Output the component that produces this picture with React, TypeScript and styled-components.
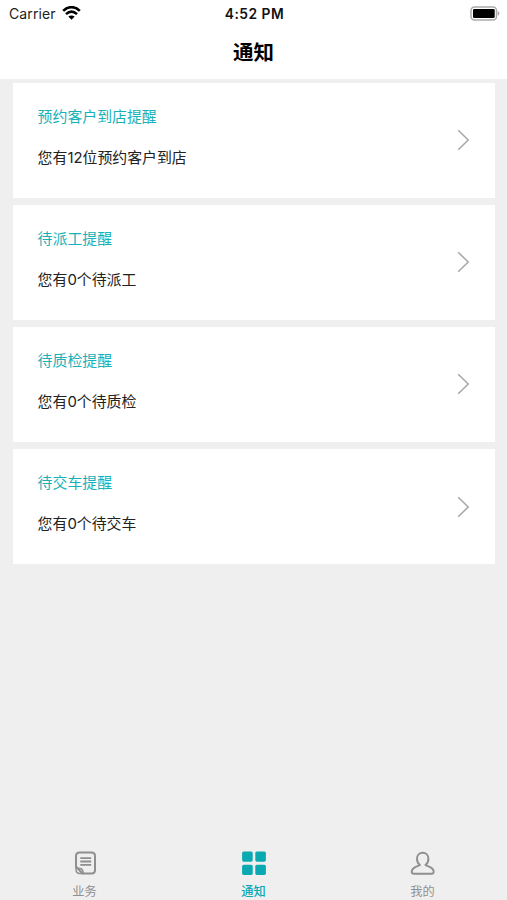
import React from 'react';
import styled, { createGlobalStyle } from 'styled-components';

const GlobalStyle = createGlobalStyle`
  * { box-sizing: border-box; }
  body {
    margin: 0;
    background: #efefef;
    font-family: Inter, "Noto Sans CJK SC", sans-serif;
  }
`;

const Screen = styled.div`
  display: flex;
  flex-direction: column;
  width: 100%;
  height: 900px;
  overflow: hidden;
  background: #efefef;
`;

const Header = styled.header`
  flex: none;
  height: 79px;
  background: #fff;
`;

const StatusBar = styled.div`
  display: grid;
  grid-template-columns: 1fr auto 1fr;
  align-items: center;
  height: 27px;
  padding: 0 7px 0 9px;
`;

const Carrier = styled.div`
  display: flex;
  align-items: center;
  gap: 6px;
  color: #222;
  font-size: 14px;
  letter-spacing: 0.12px;
`;

const Clock = styled.time`
  color: #111;
  font-size: 13.8px;
  font-weight: 600;
  letter-spacing: 0.5px;
`;

const BatterySlot = styled.div`
  display: flex;
  justify-content: flex-end;
`;

const Title = styled.h1`
  margin: 0;
  color: #000;
  font-size: 20.5px;
  font-weight: 700;
  line-height: 52px;
  text-align: center;
`;

const NoticeList = styled.main`
  display: flex;
  flex: 1;
  flex-direction: column;
  gap: 7.5px;
  padding: 4px 12.4px 0 12.8px;
`;

const Card = styled.article`
  display: flex;
  flex: none;
  align-items: center;
  justify-content: space-between;
  height: 114.6px;
  padding: 0 24.5px 0 24.8px;
  background: #fff;
`;

const CardText = styled.div`
  display: flex;
  flex-direction: column;
  gap: 19.5px;
  margin-bottom: 6px;
  font-size: 14.9px;
  line-height: 22px;
`;

const CardTitle = styled.div`
  color: #18b1b9;
`;

const CardMessage = styled.div`
  color: #222;
`;

const TabBar = styled.nav`
  display: grid;
  flex: none;
  grid-template-columns: repeat(3, 1fr);
  height: 52px;
`;

const Tab = styled.div<{ $active?: boolean }>`
  display: flex;
  flex-direction: column;
  align-items: center;
  gap: 7px;
  padding-top: 2px;
  color: ${({ $active }) => ($active ? '#09a9b2' : '#8f8f8f')};
  font-size: 12.2px;
  font-weight: ${({ $active }) => ($active ? 500 : 400)};
  line-height: 18px;

  svg { flex: none; }
`;

const WifiIcon = () => (
  <svg width="19" height="15" viewBox="0 0 19 15">
    <path d="M1.2 4.9C6-.1 13-.1 17.8 4.9M4 8.1c3.4-3.1 7.6-3.1 11 0" fill="none" stroke="#000" strokeWidth="2.6" />
    <path d="M6.3 10.6c1.9-1.5 4.5-1.5 6.4 0l-3.2 3.2z" fill="#000" />
  </svg>
);

const BatteryIcon = () => (
  <svg width="30" height="15" viewBox="0 0 30 15">
    <rect x="1" y="1" width="25.5" height="13" rx="3.5" fill="#fff" stroke="#aaa" strokeWidth="1.5" />
    <rect x="3" y="3" width="21.7" height="9" rx="1.2" fill="#000" />
    <path d="M27.7 5.1c2.3 1 2.3 3.8 0 4.8z" fill="#aaa" />
  </svg>
);

const Chevron = () => (
  <svg width="13" height="22" viewBox="0 0 13 22">
    <path d="M1.2 1.3 11.2 11 1.2 20.7" fill="none" stroke="#aaa" strokeWidth="1.6" />
  </svg>
);

const NoteIcon = () => (
  <svg width="24" height="26" viewBox="0 0 24 26" fill="none" stroke="currentColor" strokeWidth="2">
    <path d="M3 16.5V6Q3 2.5 6.5 2.5H18.5Q22 2.5 22 6V20Q22 23.5 18.5 23.5H9.5Z" strokeLinejoin="round" />
    <path d="M3 17V19.5Q3 23.5 7 23.5H10.2Q10.2 18.5 6.5 18.5Q4.5 18.5 3 17Z" strokeWidth="1.5" />
    <path d="M7.3 8.2H18.2M7.3 11.5H18.2M7.3 14.8H18.2" strokeWidth="1.8" />
  </svg>
);

const GridIcon = () => (
  <svg width="26" height="26" viewBox="0 0 26 26" fill="currentColor">
    <rect x="1.1" y="1.5" width="10.6" height="10.2" rx="1.6" />
    <rect x="14.3" y="1.5" width="10.6" height="10.2" rx="1.6" />
    <rect x="1.1" y="14.7" width="10.6" height="10.2" rx="1.6" />
    <rect x="14.3" y="14.7" width="10.6" height="10.2" rx="1.6" />
  </svg>
);

const PersonIcon = () => (
  <svg width="26" height="26" viewBox="0 0 26 26" fill="none" stroke="currentColor" strokeWidth="1.9">
    <path d="M10 15C8 13.7 7 11.4 7 8.7C7 5.1 9.4 2.7 12.7 2.7S18.4 5.1 18.4 8.7C18.4 11.4 17.4 13.7 15.4 15C17.4 16.5 23.7 17 23.7 21.8Q23.7 23.7 21.6 23.7H3.8Q1.7 23.7 1.7 21.8C1.7 17 8 16.5 10 15Z" strokeLinejoin="round" />
  </svg>
);

const notices = [
  { title: '预约客户到店提醒', message: '您有12位预约客户到店' },
  { title: '待派工提醒', message: '您有0个待派工' },
  { title: '待质检提醒', message: '您有0个待质检' },
  { title: '待交车提醒', message: '您有0个待交车' },
];

export default function App() {
  return (
    <Screen>
      <GlobalStyle />
      <Header>
        <StatusBar>
          <Carrier>Carrier <WifiIcon /></Carrier>
          <Clock>4:52 PM</Clock>
          <BatterySlot><BatteryIcon /></BatterySlot>
        </StatusBar>
        <Title>通知</Title>
      </Header>
      <NoticeList>
        {notices.map(({ title, message }) => (
          <Card key={title}>
            <CardText>
              <CardTitle>{title}</CardTitle>
              <CardMessage>{message}</CardMessage>
            </CardText>
            <Chevron />
          </Card>
        ))}
      </NoticeList>
      <TabBar>
        <Tab><NoteIcon />业务</Tab>
        <Tab $active><GridIcon />通知</Tab>
        <Tab><PersonIcon />我的</Tab>
      </TabBar>
    </Screen>
  );
}
